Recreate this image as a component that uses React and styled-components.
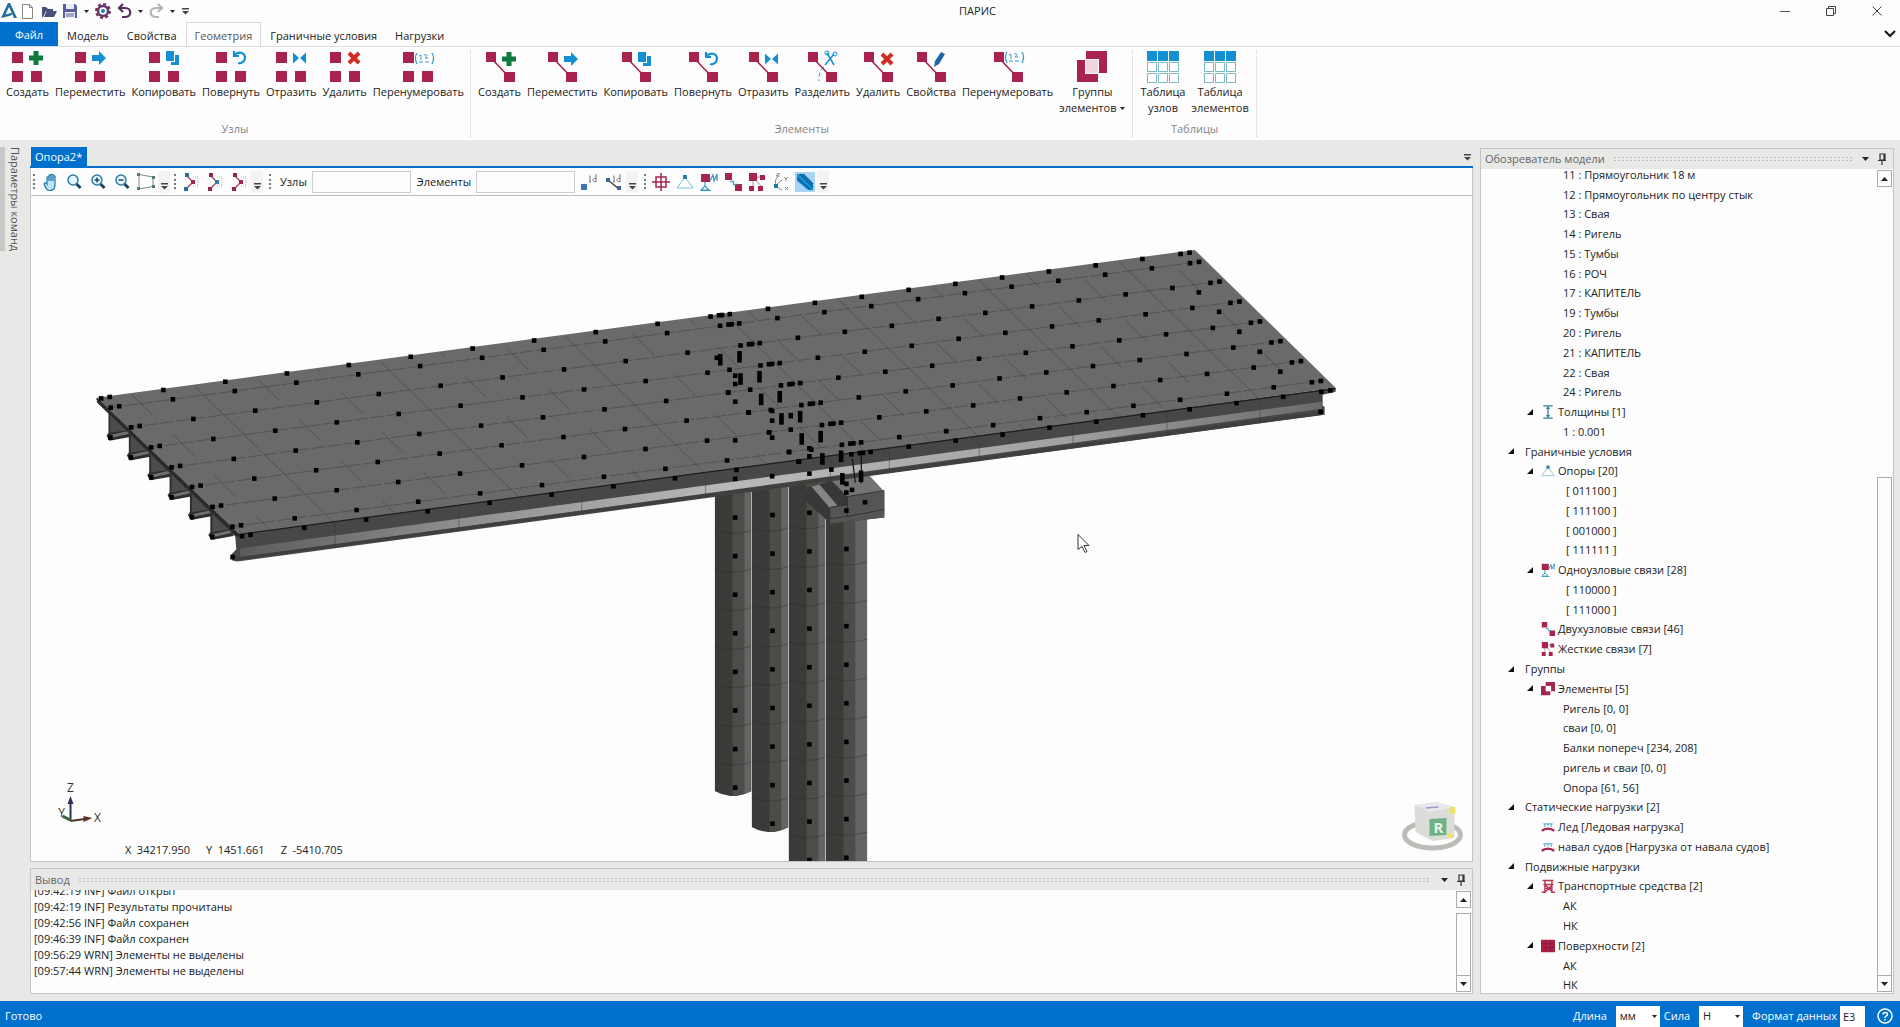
import React from "react"
import styled, { createGlobalStyle, css } from "styled-components"

const berry = "#a8244e"
const sky = "#1490d2"
const blue = "#0070cf"
const chrome = "#e8e8e6"
const paper = "#fdfdfd"
const line = "#c4c4c4"

const GlobalStyle = createGlobalStyle`
	*, *::before, *::after { box-sizing: border-box; }

	body {
		margin: 0;
		background: ${chrome};
		color: #222;
		font-family: "Open Sans", "Noto Sans", sans-serif;
		font-size: 11px;
		line-height: 16px;
	}

	button, input, select {
		font: inherit;
		color: inherit;
		margin: 0;
		padding: 0;
		border: 0;
		border-radius: 0;
		background: none;
	}

	svg { display: block; flex: none; }
`

/* ---------- shell ---------- */

const Shell = styled.div`
	display: flex;
	flex-direction: column;
	height: 100vh;
	overflow: hidden;
`

const TitleBar = styled.header`
	display: flex;
	height: 22px;
	background: ${paper};
`

const QuickAccess = styled.div`
	display: flex;
	align-items: center;
	padding-left: 1px;
`

const QuickButton = styled.button`
	display: flex;
	align-items: center;
	justify-content: center;
	width: ${(p) => p.$w || 20}px;
	height: 20px;
`

const Title = styled.h1`
	flex: 1;
	margin: 0;
	font-size: 11px;
	font-weight: 400;
	line-height: 22px;
	text-align: center;
`

const WindowButton = styled(QuickButton)`
	width: 46px;
	height: 22px;
`

const Tabs = styled.nav`
	display: flex;
	height: 25px;
	background: ${paper};
	border-bottom: 1px solid #dedede;
`

const Tab = styled.button`
	padding: 2px 8px 0;
	border: 1px solid transparent;
	border-bottom: 0;
	${(p) => p.$active && css`
		color: #555;
		border-color: #d8d8d8;
	`}
`

const FileTab = styled(Tab)`
	width: 58px;
	padding-top: 0;
	color: #fff;
	background: ${blue};
`

const CollapseButton = styled(QuickButton)`
	margin-left: auto;
	height: 24px;
`

const Ribbon = styled.div`
	display: flex;
	height: 93px;
	padding: 3px 0 3px;
	background: ${paper};
`

const Group = styled.section`
	display: flex;
	flex-direction: column;
	justify-content: space-between;
	padding: 0 ${(p) => p.$pad || 3}px;
	border-right: 1px dotted #cfcfcf;
`

const GroupItems = styled.div`
	display: flex;
	align-items: flex-start;
`

const GroupName = styled.div`
	color: #858585;
	text-align: center;
`

const Command = styled.button`
	display: flex;
	flex-direction: column;
	align-items: center;
	padding: 1px 3px 0;
	white-space: pre;

	> svg { margin-bottom: 1px; }
`

const DropLine = styled.span`
	display: flex;
	align-items: center;
	gap: 4px;
`

const Workspace = styled.main`
	display: flex;
	flex: 1;
	min-height: 0;
	padding: 7px 6px 7px 0;
`

const SideStrip = styled.aside`
	width: 30px;
`

const SideTab = styled.button`
	writing-mode: vertical-rl;
	display: block;
	padding-left: 2px;
	border-left: 5px solid #c8c8c8;
	color: #555;
	white-space: nowrap;
`

const Center = styled.div`
	display: flex;
	flex: 1;
	flex-direction: column;
	min-width: 0;
`

const DocTabs = styled.div`
	display: flex;
	align-items: flex-start;
	justify-content: space-between;
	height: 21px;
	border-bottom: 2px solid ${blue};
`

const DocTab = styled.button`
	height: 19px;
	margin-left: 1px;
	padding: 1px 5px 0 4px;
	color: #fff;
	background: ${blue};
`

const Doc = styled.section`
	display: flex;
	flex: 1;
	flex-direction: column;
	min-height: 0;
	border: 1px solid ${line};
	border-top: 0;
	background: ${paper};
`

const Toolbar = styled.div`
	display: flex;
	align-items: center;
	height: 28px;
	padding-left: 2px;
	border-bottom: 1px solid #bdbdbd;
`

const Grip = styled.span`
	width: 5px;
	height: 15px;
	margin-left: ${(p) => p.$gap || 0}px;
	border-left: 2px dotted #777;
	border-right: 3px solid transparent;
`

const Tool = styled.button`
	display: flex;
	align-items: center;
	justify-content: center;
	width: 24px;
	height: 20px;
	${(p) => p.$on && css`
		background: linear-gradient(90deg, transparent 2px, #a9d4f5 2px 22px, transparent 22px);
	`}
`

const Overflow = styled.button`
	display: flex;
	align-items: flex-end;
	justify-content: center;
	width: 12px;
	height: 22px;
	padding-bottom: 3px;
	background: #f3f3f1;
`

const FieldLabel = styled.label`
	margin: 0 5px 0 6px;
`

const Field = styled.input`
	width: 99px;
	height: 22px;
	border: 1px solid #cccccc;
	background: ${paper};
	& + button { margin-left: 3px; }
`

const Viewport = styled.div`
	position: relative;
	flex: 1;
	min-height: 0;

	> svg { width: 100%; height: 100%; }
`

const Readout = styled.output`
	position: absolute;
	left: 94px;
	bottom: 3px;
	display: flex;
	gap: 16px;
`

const Panel = styled.section`
	display: flex;
	flex-direction: column;
	border: 1px solid ${line};
	background: ${paper};
`

const LogPanel = styled(Panel)`
	height: 126px;
	margin-top: 6px;
`

const ModelPanel = styled(Panel)`
	width: 414px;
	margin: 1px 0 0 7px;
`

const PanelHead = styled.header`
	display: flex;
	align-items: center;
	height: ${(p) => p.$h}px;
	padding: 0 3px 0 4px;
	color: #666;
	background: ${chrome};

	h2 {
		margin: 0;
		font-size: 11px;
		font-weight: 400;
	}
`

const Dots = styled.span`
	flex: 1;
	height: 6px;
	margin: 0 4px 0 8px;
	background: radial-gradient(circle, #bdbdbd 1px, transparent 1px) 0 0 / 4px 3px;
`

const PanelBody = styled.div`
	display: flex;
	flex: 1;
	min-height: 0;
	overflow: hidden;
`

const LogLines = styled.ol`
	display: flex;
	flex: 1;
	flex-direction: column;
	justify-content: flex-end;
	margin: 0;
	padding: 0 0 14px 3px;
	list-style: none;
	overflow: hidden;
`

const Tree = styled.ul`
	display: flex;
	flex: 1;
	flex-direction: column;
	margin: -4px 0 -2px;
	padding: 0;
	list-style: none;
`

const indents = { root: 26, branch: 45, leaf: 82, code: 85 }

const TreeRow = styled.li`
	display: flex;
	flex: 1;
	align-items: center;
	padding-left: ${(p) => indents[p.$kind]}px;
	white-space: nowrap;
`

const Twisty = styled.span`
	width: ${(p) => (p.$kind === "root" ? 18 : 15)}px;
`

const RowIcon = styled.span`
	width: 17px;
`

const Scroll = styled.div`
	display: flex;
	flex-direction: column;
	width: 15px;
	margin: 1px 1px 1px 0;

	button {
		display: flex;
		align-items: center;
		justify-content: center;
		height: 17px;
		border: 1px solid #ababab;
	}
`

const ScrollGap = styled.div`
	flex: ${(p) => p.$size} 0 0;
`

const ScrollThumb = styled.div`
	flex: ${(p) => p.$size} 0 0;
	border: 1px solid #ababab;
	border-bottom: 0;
`

const StatusBar = styled.footer`
	display: flex;
	align-items: center;
	height: 26px;
	padding: 4px 6px 0 5px;
	color: #fff;
	background: ${blue};
`

const StatusText = styled.span`
	flex: 1;
`

const UnitLabel = styled.label`
	margin: 0 9px 0 4px;
`

const FormatLabel = styled.label`
	margin: 0 3px 0 9px;
`

const SelectBox = styled.span`
	position: relative;

	select {
		appearance: none;
		display: block;
		width: 44px;
		height: 21px;
		padding-left: 4px;
		color: #222;
		background: #fff;
	}

	svg {
		position: absolute;
		top: 9px;
		right: 3px;
		pointer-events: none;
	}
`

const FormatField = styled.input`
	width: 25px;
	height: 21px;
	margin-right: 11px;
	padding-left: 3px;
	color: #222;
	background: #fff;
`

/* ---------- small icons ---------- */

const Caret = ({ fill = "#222", flip }) => (
	<svg width="7" height="4" viewBox="0 0 7 4">
		<path d={flip ? "M0 4h7L3.500 0z" : "M0 0h7L3.500 4z"} fill={fill} />
	</svg>
)

const SmallCaret = () => (
	<svg width="5" height="3" viewBox="0 0 5 3">
		<path d="M0 0h5L2.500 3z" fill="#222" />
	</svg>
)

const MoreMark = () => (
	<svg width="7" height="7" viewBox="0 0 7 7">
		<path d="M0 0h7v1.500H0zM0 3h7L3.500 6.500z" fill="#444" />
	</svg>
)

const Pin = () => (
	<svg width="10" height="12" viewBox="0 0 10 12">
		<path d="M3 1h5v6H3zM1 7.500h8M5 7.500V12M7 1v6" fill="none" stroke="#333" strokeWidth="1.200" />
	</svg>
)

const quickIcons = {
	logo: <path d="M0 15 7 0h2l7 15h-3L8 4 4.500 11.500 12 9.500l-2 3z" fill="#1f6f9f" />,
	doc: <path d="M2.500 1.500h7l3 3v11h-10zM9.500 1.500v3h3" fill="#fff" stroke="#888" />,
	open: <path d="M1 4h4l2 2h5v2H5l-3 6H1zM5.500 8H16l-3 6H3z" fill="#46527a" />,
	save: (
		<g>
			<path d="M1 1h12l2 2v12H1z" fill="#5d5d9c" />
			<path d="M4 1h8v5H4zM3 9h10v6H3z" fill="#e8eef6" />
			<path d="M4 11h8M4 13h8" stroke="#5d5d9c" />
		</g>
	),
	gear: (
		<g fill="none">
			<circle cx="8" cy="8" r="5" stroke="#5c3a6c" strokeWidth="2.500" />
			<circle cx="8" cy="8" r="7" stroke="#7d2850" strokeWidth="2" strokeDasharray="3 2.500" />
			<circle cx="8" cy="8" r="2" fill="#1d7cba" />
		</g>
	),
	undo: <path d="M6 1 2 5l4 4M2 5h6c7 0 7 9 0 9H5" fill="none" stroke="#5b2e62" strokeWidth="2.200" />,
	redo: <path d="M10 1l4 4-4 4M14 5H8C1 5 1 14 8 14h3" fill="none" stroke="#b5b5b5" strokeWidth="2.200" />,
}

const QuickIcon = ({ name }) => (
	<svg width="16" height="16" viewBox="0 0 16 16">{quickIcons[name]}</svg>
)

const marks = {
	create: <path d="M4.500 0h5v4.500H14v5H9.500V14h-5V9.500H0v-5h4.500z" fill="#0b7a3a" />,
	move: <path d="M0 4h7V0l7 7-7 7v-4H0z" fill={sky} />,
	copy: (
		<g fill={sky}>
			<path d="M0 0h8v10H0z" />
			<path d="M9 4h4v10H5v-3h4z" />
		</g>
	),
	rotate: <path d="M2 3.500c5-4 10-1 10 3S8 13 5 12M1 0v5h5" fill="none" stroke={sky} strokeWidth="2.200" />,
	mirror: <path d="M0 1.500 6 7l-6 5.500zM13 1.500 7 7l6 5.500z" fill={sky} />,
	remove: <path d="M2 2l10 10M12 2 2 12" stroke="#d12d26" strokeWidth="4" />,
	split: (
		<g fill="none" stroke={sky}>
			<path d="M1 13 10 2M10 13 3 1" strokeWidth="1.500" />
			<circle cx="3" cy="1" r="2" />
			<circle cx="11" cy="2" r="2" />
			<path d="M0 15c-4 3-5 7-5 14" strokeDasharray="4 3" />
		</g>
	),
	edit: <path d="M8 0l4 2-6 10-5 3 1-6z" fill="#1b68a8" />,
	number: (
		<g fill="none" stroke="#3b9bc4">
			<path d="M2 1C0 4 0 8 2 12M17 1c2 3 2 7 0 11" strokeWidth="1.300" />
			<path d="M4 4l2-1v5M9 3c4-1 3 1 1 3h3M4 10h4M10 10h4" />
		</g>
	),
}

const NodeIcon = ({ mark }) => (
	<svg width="32" height="32" viewBox="0 0 32 32" overflow="visible">
		<path d="M1 1h11v11H1zM1 20h11v11H1zM20 20h11v11H20z" fill={berry} />
		<g transform={mark === "number" ? "translate(13 1)" : "translate(18 0)"}>{marks[mark]}</g>
	</svg>
)

const ElementIcon = ({ mark }) => (
	<svg width="32" height="32" viewBox="0 0 32 32" overflow="visible">
		<path d="M7 7l18 19" stroke={berry} strokeWidth="1.600" />
		<path d="M2 1h10v10H2zM20 21h11v10H20z" fill={berry} />
		<g transform={mark === "number" ? "translate(13 0)" : "translate(18 1)"}>{marks[mark]}</g>
	</svg>
)

const OverlapIcon = () => (
	<svg width="32" height="32" viewBox="0 0 32 32">
		<path d="M10 0h21v22H10zM1 9h21v22H1z" fill={berry} />
		<path d="M9 8h14v15H9z" fill="#fff" />
		<path d="M10 9h12v13H10z" fill="#f3d3dc" />
		<path d="M9.500 9V.5M22 22.500h9" stroke="#fff" />
	</svg>
)

const TableIcon = () => (
	<svg width="34" height="32" viewBox="0 0 34 32">
		<path d="M1 0h10v10H1zM12 0h10v10H12zM23 0h10v10H23z" fill={sky} />
		<path
			d="M1.500 11.500h9v9h-9zM12.500 11.500h9v9h-9zM23.500 11.500h9v9h-9zM1.500 22.500h9v9h-9zM12.500 22.500h9v9h-9zM23.500 22.500h9v9h-9z"
			fill="#fff"
			stroke="#7db8c8"
		/>
	</svg>
)

const lens = (
	<g fill="none">
		<circle cx="8" cy="7" r="5" fill="#e6f4fb" stroke="#2a7fae" strokeWidth="1.500" />
		<path d="M11.500 11l4 4" stroke="#1c4560" strokeWidth="3" />
	</g>
)

const nodesPath = (a, b) => (
	<g>
		<path d="M5 3l6 6-7 7" fill="none" stroke="#9a3a55" strokeWidth="1.200" />
		<path d="M11 4h5v9h-5" fill="none" stroke="#c9a9a0" strokeDasharray="1 1" />
		<path d="M3 0h4v4H3zM2 14h4v4H2z" fill={a} />
		<path d="M9 7h4v4H9z" fill={b} />
	</g>
)

const idGlyph = <path d="M9 3v6M8 3h1M8 9h2M15 1v8M15 5.500c-4-1-4 4 0 3.200" fill="none" stroke="#777" />

const toolIcons = {
	hand: (
		<path
			d="M6 10V4.500c0-1 2-1 2 0V8 2.500c0-1 2-1 2 0V8 2c0-1 2-1 2 0v6-4.500c0-1 2-1 2 0V12c0 4-2 5.500-5 5.500S5 16 3 11c0-1.500 2-1.500 3 0z"
			fill="#bfe3f4"
			stroke="#1c76a8"
			strokeWidth="1.200"
		/>
	),
	zoom: lens,
	zoomIn: <g>{lens}<path d="M5.500 7h5M8 4.500v5" stroke="#1c4560" strokeWidth="1.500" /></g>,
	zoomOut: <g>{lens}<path d="M5.500 7h5" stroke="#1c4560" strokeWidth="1.500" /></g>,
	frame: (
		<g>
			<path d="M2 1.500 16 4v9.500L2 16z" fill="none" stroke="#888" />
			<path d="M0 0h3v3H0zM0 14h3v3H0zM15 3h3v3h-3zM15 12h3v3h-3z" fill="#4c8060" />
		</g>
	),
	pickNodes: nodesPath("#2a6f9c", berry),
	pickElements: nodesPath("#8c2945", "#2a7fb0"),
	pickAll: nodesPath("#8c2945", berry),
	nodeId: (
		<g>
			<path d="M0 11h6v6H0z" fill="#4472ac" />
			{idGlyph}
		</g>
	),
	elementId: (
		<g>
			<path d="M3 7l11 9" stroke="#444" strokeWidth="1.500" />
			<path d="M1 5h4v4H1zM12 13h4v4h-4z" fill="#3b6794" />
			{idGlyph}
		</g>
	),
	target: (
		<path d="M9 0v18M0 9h18M4 4h10v10H4z" fill="none" stroke={berry} strokeWidth="1.500" />
	),
	support: (
		<g>
			<path d="M9 4 1 15h16z" fill="none" stroke="#7fc0c8" />
			<path d="M7 2h4v4H7z" fill="#2b7aa8" />
		</g>
	),
	single: (
		<g>
			<path d="M1 1h9v8H1z" fill={berry} />
			<path d="M5 9v5M1 17l4-4 4 4zM1 17.500h10M10 8l3-6 1 6 3-7v7" fill="none" stroke="#3a96bb" strokeWidth="1.200" />
		</g>
	),
	double: (
		<g>
			<path d="M1 0h7v7H1zM11 11h7v7h-7z" fill={berry} />
			<path d="M6 9l3-1 1 4 3-1" fill="none" stroke="#3a96bb" strokeWidth="1.200" />
		</g>
	),
	rigid: (
		<g>
			<path d="M5 5v9M6 5l8 9M6 4h8" stroke="#999" />
			<path d="M1 0h8v8H1zM12 2h5v5h-5zM1 13h5v5H1zM10 13h5v5h-5z" fill={berry} />
		</g>
	),
	axes: (
		<g fill="none" stroke="#888">
			<path d="M6 4C2 6 2 14 10 17M4 12l6-5M4 0h4L4 3h4M12 4l2 2 2-2M14 6v2M13 14l3 3M16 14l-3 3" />
			<path d="M2 11h4v4H2z" fill="#1b78aa" stroke="none" />
		</g>
	),
	solid: (
		<g>
			<path d="M1 1h6l10 10v6h-5L1 8z" fill={sky} />
			<path d="M4 1l13 13M1 5l14 12M7 1l10 10" stroke="#0a5c96" strokeWidth="1.200" />
		</g>
	),
	thickness: <path d="M3 1h12M3 17h12M9 2v14M7 5l2-2 2 2M7 13l2 2 2-2" fill="none" stroke="#2a7fa5" strokeWidth="1.600" />,
	groups: (
		<g>
			<path d="M6 0h12v12H6zM0 5h12v12H0z" fill={berry} />
			<path d="M6 5h7v7H6z" fill="#fff" />
		</g>
	),
	load: (
		<g fill="none">
			<path d="M1 14c4-4 12-4 16 0" stroke={berry} strokeWidth="3" />
			<path d="M3 5h12M5 5v4M9 5v3M13 5v4" stroke="#3aa0bd" strokeWidth="1.200" />
		</g>
	),
	vehicle: (
		<path d="M2 2h14M5 2v15M14 2v15M3 7h13M5 12h9M6 8l8 8M14 8l-8 8M1 17h5M13 17h5" fill="none" stroke="#b83556" strokeWidth="1.800" />
	),
	surface: (
		<g>
			<path d="M0 1h18v16H0z" fill="#b02040" />
			<path d="M0 6h18M0 11h18M6 1v16M12 1v16" stroke="#7d1d45" />
		</g>
	),
}

const ToolIcon = ({ name, size = 18 }) => (
	<svg width={size} height={size} viewBox="0 0 18 18">{toolIcons[name]}</svg>
)

/* ---------- bridge model ---------- */

// offsets of the node rows from the far edge of the deck
const rows = [[0, 0], [9.5, 9.3], [30, 29], [50, 49], [70.5, 69], [91, 88.7], [111.5, 108.7], [131.5, 128.5], [141, 138]]

const farEdge = [
	[100.7, 398.7], [109.3, 397.3], [163, 390.3], [225, 382], [286.7, 373.7], [348.7, 365.3], [410.7, 357],
	[472.7, 348.7], [534.3, 340.7], [596, 332.3], [658, 324], [711, 316.7], [719.5, 315.5], [722.5, 315.2], [730.3, 314.3], [768.5, 309],
	[815.5, 303], [862.5, 297], [909.4, 290], [956.2, 284], [1003, 277.6], [1049.8, 271.6], [1096.7, 265.5],
	[1143.5, 259.1], [1181.7, 254], [1190.7, 252.7],
]

const seams = [131, 194, 256, 318, 380, 441, 503, 565, 627, 690, 726, 749, 792, 839, 886, 933, 980, 1027, 1073, 1120, 1165]

// x, y, height of the nodes of the bearings
const bearings = [
	[720.7, 360, 11], [717.3, 358, 4], [740, 357, 11], [730, 370, 4], [735.7, 376, 4], [735.7, 384.3, 4],
	[741, 379.3, 11], [760, 377, 11], [728.7, 392.7, 4], [750.7, 390, 4], [735.7, 402, 4], [761.7, 399.7, 11],
	[780.3, 397, 11], [749.3, 413, 4], [771.3, 410.3, 4], [772.7, 411.3, 4], [772.7, 421, 4], [782, 417.3, 7],
	[782, 422.7, 4], [791.3, 416, 5], [800.7, 417, 11], [791.3, 430, 4], [769.7, 432.7, 4], [772.7, 438, 4],
	[802.3, 439.3, 11], [821.3, 437, 11], [789.7, 452.3, 4], [810, 448.7, 4], [812, 450, 4], [810, 456.7, 4],
	[823, 459.3, 11], [841.7, 456.7, 11], [799.7, 462, 4], [832, 470, 4], [735.7, 440.7, 4], [735.7, 479.3, 4],
	[772.7, 476.7, 4], [810, 474, 4], [843, 479.3, 11], [847, 484.3, 4], [847, 493, 4], [852.7, 490.3, 4],
	[861.7, 476.7, 11], [865.7, 502.7, 4], [847, 511, 4],
	[1200, 292.5, 4], [1220.3, 312, 4], [1240.6, 332, 4], [1261, 352, 4], [1281.6, 372, 4], [1322, 412, 4],
]

const piles = [
	{ x: 715, w: 37, end: 792, node: 735.7, from: 518, count: 8 },
	{ x: 752, w: 37, end: 828, node: 773, from: 515.5, count: 9 },
	{ x: 789, w: 37, end: 870, node: 810, from: 513.3, count: 10 },
	{ x: 826, w: 42, end: 870, node: 847, from: 549.5, count: 9 },
]

const Node = ({ x, y, h = 4 }) => <rect x={x - 2.3} y={y - h / 2 - 0.3} width="4.600" height={h + 0.6} fill="#000" />

const Pile = ({ x, w, end, node, from, count }) => {
	const ticks = Array.from({ length: count }, (_, i) => from + i * 38.65)
	return (
		<g>
			<clipPath id={`pile${x}`}>
				<path d={`M${x} 470V${end}q${w / 2} 10 ${w} 0V470z`} />
			</clipPath>
			<g clipPath={`url(#pile${x})`}>
				<rect x={x} y="470" width={w} height="400" fill="#3a3a38" />
				<rect x={x + 18} y="470" width={w - 18} height="400" fill="#4c4c49" />
				<rect x={x + 30} y="470" width={w - 30} height="400" fill="#646464" />
				{ticks.filter((y) => y + 20 < end).map((y) => (
					<path key={y} d={`M${x} ${y + 13}q${w / 2} 6 ${w} 0`} fill="none" stroke="#2b2b29" strokeWidth="0.400" />
				))}
			</g>
			{ticks.map((y) => <Node key={y} x={node} y={y} />)}
		</g>
	)
}

const Beam = ({ i }) => (
	<g transform={`translate(${i * 20.4} ${i * 19.9})`}>
		<path d="M108 411v22l-2 3 3 5 22-4v-6z" fill="#2f2f2e" />
		<path d="M110 414v19l20-3z" fill="#4c4c4a" />
		<path d="M111 435l18-4v3l-18 4z" fill="#70706e" />
		<Node x={110} y={438} />
	</g>
)

const Model = () => (
	<svg viewBox="31 196 1442 666" role="img" aria-label="Опора2">
		<defs>
			<linearGradient id="flange">
				<stop offset="0" stopColor="#5c5c5c" />
				<stop offset="0.200" stopColor="#8e8e8d" />
				<stop offset="0.450" stopColor="#b9b9b8" />
				<stop offset="0.750" stopColor="#a3a3a2" />
				<stop offset="1" stopColor="#6b6b6b" />
			</linearGradient>
		</defs>

		{piles.map((p) => <Pile key={p.x} {...p} />)}

		<path d="M808 488l24-7 16 16 37-5v26l-54 6-26-24z" fill="#383837" />
		<path d="M812 487l8-2 18 21-8 2z" fill="#858584" />
		<path d="M832 481l38-5 15 16-37 5z" fill="#747473" />
		<path d="M831 508l17-3v-8l37-6v27l-54 6z" fill="#555553" />
		<path d="M831 508l17-3v-8l37-6M831 519l17-2 37-7M848 505v12" fill="none" stroke="#2c2c2b" strokeWidth="0.800" />

		{[0, 1, 2, 3, 4, 5].map((i) => <Beam key={i} i={i} />)}

		<path d="M96 398l2 6 137 133 1 13-5 5 1 6 5 1L1326 415v-8l-2-1v-11l13-3v-4L238 530z" fill="#474746" />
		<path d="M240 549 1323 402v7L240 558z" fill="url(#flange)" />
		<path d="M235 558 1325 411v4L235 561z" fill="#3f3f3e" />
		<path d="M96 398 1196 250l141 138L238 535z" fill="#6a6a69" />
		<path d="M96 399l142 136L1337 389" fill="none" stroke="#1d1d1c" strokeWidth="1.200" />
		<path d="M97 401l141 136" stroke="#2b2b2a" strokeWidth="3" />

		<g stroke="#3a3a37" strokeWidth="0.500" fill="none">
			{rows.slice(1, 8).map(([dx, dy]) => (
				<path key={dx} d={`M${98 + dx} ${399 + dy}L${1194 + dx} ${252 + dy}`} strokeDasharray="14 2" />
			))}
			{seams.map((x, i) => (
				<path
					key={x}
					d={`M${x} ${394.8 - (x - 131) * 0.1345}l141 138`}
					strokeDasharray={i % 3 === 1 ? "none" : "30 28"}
					strokeDashoffset={i * 28}
				/>
			))}
			{seams.filter((x, i) => i % 2).map((x) => (
				<path key={x} d={`M${x + 141} ${533 - (x - 131) * 0.1345}v24`} />
			))}
		</g>

		{rows.map(([dx, dy]) => farEdge.map(([x, y]) => <Node key={`${x}-${dx}`} x={x + dx} y={y + dy} />))}
		{bearings.map(([x, y, h]) => <Node key={`${x}-${y}`} x={x} y={y} h={h} />)}
		<Node x={232.3} y={557.7} />
		<path d="M853 459l3 24M862 456v28" stroke="#111" strokeWidth="1.200" />

		<path d="M1079 535v15l4-3 3 6 2-1-3-6h5z" fill="#fff" stroke="#333" />

		<g strokeWidth="2">
			<path d="M70 822V802" stroke="#2e2e5c" />
			<path d="M67 805h6l-3-8z" fill="#2e2e5c" />
			<path d="M70 822l14-2" stroke="#5a3426" />
			<path d="M83 817v6l9-4z" fill="#5a3426" />
			<path d="M70 821l-8-4" stroke="#3a6b42" strokeWidth="3" />
		</g>
		<g fontSize="12" fill="#333" textAnchor="middle">
			<text x="70" y="793">Z</text>
			<text x="97" y="823">X</text>
			<text x="61" y="818">Y</text>
		</g>

		<ellipse cx="1434" cy="836" rx="28" ry="13" fill="none" stroke="#bdbdb8" strokeWidth="5" />
		<path d="M1416 806l22-3 18 5v31l-22 3-17-9z" fill="#dcdcd8" />
		<path d="M1416 806l22-3 18 5-24 5z" fill="#e9e9ec" />
		<path d="M1427 809l13-1" stroke="#9a9ad0" strokeWidth="1.500" />
		<path d="M1451 808h6v7h-6zM1449 834h5v5h-5z" fill="#f0e070" />
		<path d="M1431 820l17-1v17l-17 1z" fill="#6fb183" />
		<text x="1440" y="834" fontSize="15" fontWeight="700" fill="#e8f3ea" textAnchor="middle">R</text>
	</svg>
)

/* ---------- content ---------- */

const nodeCommands = [
	["Создать", "create"], ["Переместить", "move"], ["Копировать", "copy"], ["Повернуть", "rotate"],
	["Отразить", "mirror"], ["Удалить", "remove"], ["Перенумеровать", "number"],
]

const elementCommands = [
	["Создать", "create"], ["Переместить", "move"], ["Копировать", "copy"], ["Повернуть", "rotate"],
	["Отразить", "mirror"], ["Разделить", "split"], ["Удалить", "remove"], ["Свойства", "edit"],
	["Перенумеровать", "number"],
]

const log = [
	"[09:42:19 INF] Файл открыт",
	"[09:42:19 INF] Результаты прочитаны",
	"[09:42:56 INF] Файл сохранен",
	"[09:46:39 INF] Файл сохранен",
	"[09:56:29 WRN] Элементы не выделены",
	"[09:57:44 WRN] Элементы не выделены",
]

const tree = [
	["leaf", "11 : Прямоугольник 18 м"],
	["leaf", "12 : Прямоугольник по центру стык"],
	["leaf", "13 : Свая"],
	["leaf", "14 : Ригель"],
	["leaf", "15 : Тумбы"],
	["leaf", "16 : РОЧ"],
	["leaf", "17 : КАПИТЕЛЬ"],
	["leaf", "19 : Тумбы"],
	["leaf", "20 : Ригель"],
	["leaf", "21 : КАПИТЕЛЬ"],
	["leaf", "22 : Свая"],
	["leaf", "24 : Ригель"],
	["branch", "Толщины [1]", "thickness"],
	["leaf", "1 : 0.001"],
	["root", "Граничные условия"],
	["branch", "Опоры [20]", "support"],
	["code", "[ 011100 ]"],
	["code", "[ 111100 ]"],
	["code", "[ 001000 ]"],
	["code", "[ 111111 ]"],
	["branch", "Одноузловые связи [28]", "single"],
	["code", "[ 110000 ]"],
	["code", "[ 111000 ]"],
	["branch", "Двухузловые связи [46]", "double", true],
	["branch", "Жесткие связи [7]", "rigid", true],
	["root", "Группы"],
	["branch", "Элементы [5]", "groups"],
	["leaf", "Ригель [0, 0]"],
	["leaf", "сваи [0, 0]"],
	["leaf", "Балки попереч [234, 208]"],
	["leaf", "ригель и сваи [0, 0]"],
	["leaf", "Опора [61, 56]"],
	["root", "Статические нагрузки [2]"],
	["branch", "Лед [Ледовая нагрузка]", "load", true],
	["branch", "навал судов [Нагрузка от навала судов]", "load", true],
	["root", "Подвижные нагрузки"],
	["branch", "Транспортные средства [2]", "vehicle"],
	["leaf", "АК"],
	["leaf", "НК"],
	["branch", "Поверхности [2]", "surface"],
	["leaf", "АК"],
	["leaf", "НК"],
]

const Tools = ({ names, active }) =>
	names.map((name) => (
		<Tool key={name} $on={name === active} aria-label={name}>
			<ToolIcon name={name} />
		</Tool>
	))

const Scrollbar = ({ before, thumb }) => (
	<Scroll>
		<button aria-label="Вверх"><Caret flip /></button>
		<ScrollGap $size={before} />
		<ScrollThumb $size={thumb} />
		<button aria-label="Вниз"><Caret /></button>
	</Scroll>
)

const PanelHeader = ({ title, height }) => (
	<PanelHead $h={height}>
		<h2>{title}</h2>
		<Dots />
		<QuickButton $w={18} aria-label="Меню панели"><Caret /></QuickButton>
		<QuickButton $w={16} aria-label="Закрепить"><Pin /></QuickButton>
	</PanelHead>
)

const TreeItem = ({ kind, text, icon, closed }) => (
	<TreeRow $kind={kind}>
		{(kind === "root" || kind === "branch") && (
			<Twisty $kind={kind}>
				{!closed && <svg width="8" height="7" viewBox="0 0 8 7"><path d="M7 0v6H1z" fill="#111" /></svg>}
			</Twisty>
		)}
		{icon && <RowIcon><ToolIcon name={icon} size={14} /></RowIcon>}
		{text}
	</TreeRow>
)

const App = () => (
	<Shell>
		<GlobalStyle />
		<TitleBar>
			<QuickAccess>
				<QuickButton $w={16} aria-label="ПАРИС"><QuickIcon name="logo" /></QuickButton>
				<QuickButton $w={22} aria-label="Новый"><QuickIcon name="doc" /></QuickButton>
				<QuickButton aria-label="Открыть"><QuickIcon name="open" /></QuickButton>
				<QuickButton $w={22} aria-label="Сохранить"><QuickIcon name="save" /></QuickButton>
				<QuickButton $w={10} aria-label="Варианты сохранения"><SmallCaret /></QuickButton>
				<QuickButton $w={24} aria-label="Настройки"><QuickIcon name="gear" /></QuickButton>
				<QuickButton aria-label="Отменить"><QuickIcon name="undo" /></QuickButton>
				<QuickButton $w={10} aria-label="История отмены"><SmallCaret /></QuickButton>
				<QuickButton $w={22} aria-label="Повторить"><QuickIcon name="redo" /></QuickButton>
				<QuickButton $w={10} aria-label="История повтора"><SmallCaret /></QuickButton>
				<QuickButton $w={16} aria-label="Настройка панели"><MoreMark /></QuickButton>
			</QuickAccess>
			<Title>ПАРИС</Title>
			<WindowButton aria-label="Свернуть">
				<svg width="10" height="10" viewBox="0 0 10 10"><path d="M0 5.500h10" stroke="#555" /></svg>
			</WindowButton>
			<WindowButton aria-label="Восстановить">
				<svg width="10" height="10" viewBox="0 0 10 10"><path d="M.5 2.500h7v7h-7zM2.500 2V.5h7v7H8" fill="none" stroke="#444" /></svg>
			</WindowButton>
			<WindowButton aria-label="Закрыть">
				<svg width="10" height="10" viewBox="0 0 10 10"><path d="M.5.5l9 9M9.500.5l-9 9" stroke="#444" /></svg>
			</WindowButton>
		</TitleBar>

		<Tabs>
			<FileTab>Файл</FileTab>
			<Tab>Модель</Tab>
			<Tab>Свойства</Tab>
			<Tab $active>Геометрия</Tab>
			<Tab>Граничные условия</Tab>
			<Tab>Нагрузки</Tab>
			<CollapseButton aria-label="Свернуть ленту">
				<svg width="12" height="8" viewBox="0 0 12 8"><path d="M1 1l5 5 5-5" fill="none" stroke="#111" strokeWidth="2" /></svg>
			</CollapseButton>
		</Tabs>

		<Ribbon>
			<Group>
				<GroupItems>
					{nodeCommands.map(([label, mark]) => (
						<Command key={label}><NodeIcon mark={mark} />{label}</Command>
					))}
				</GroupItems>
				<GroupName>Узлы</GroupName>
			</Group>
			<Group $pad={4}>
				<GroupItems>
					{elementCommands.map(([label, mark]) => (
						<Command key={label}><ElementIcon mark={mark} />{label}</Command>
					))}
					<Command>
						<OverlapIcon />
						Группы
						<DropLine>элементов<SmallCaret /></DropLine>
					</Command>
				</GroupItems>
				<GroupName>Элементы</GroupName>
			</Group>
			<Group $pad={4}>
				<GroupItems>
					<Command><TableIcon />{"Таблица\nузлов"}</Command>
					<Command><TableIcon />{"Таблица\nэлементов"}</Command>
				</GroupItems>
				<GroupName>Таблицы</GroupName>
			</Group>
		</Ribbon>

		<Workspace>
			<SideStrip><SideTab>Параметры команд</SideTab></SideStrip>

			<Center>
				<DocTabs>
					<DocTab>Опора2*</DocTab>
					<QuickButton $w={12} aria-label="Список документов"><MoreMark /></QuickButton>
				</DocTabs>
				<Doc>
					<Toolbar>
						<Grip />
						<Tools names={["hand", "zoom", "zoomIn", "zoomOut", "frame"]} />
						<Overflow aria-label="Ещё"><MoreMark /></Overflow>
						<Grip $gap={4} />
						<Tools names={["pickNodes", "pickElements", "pickAll"]} />
						<Overflow aria-label="Ещё"><MoreMark /></Overflow>
						<Grip $gap={6} />
						<FieldLabel htmlFor="nodes">Узлы</FieldLabel>
						<Field id="nodes" />
						<FieldLabel htmlFor="elements">Элементы</FieldLabel>
						<Field id="elements" />
						<Tools names={["nodeId", "elementId"]} />
						<Overflow aria-label="Ещё"><MoreMark /></Overflow>
						<Grip $gap={6} />
						<Tools names={["target", "support", "single", "double", "rigid", "axes", "solid"]} active="solid" />
						<Overflow aria-label="Ещё"><MoreMark /></Overflow>
					</Toolbar>
					<Viewport>
						<Model />
						<Readout>
							<span>X&ensp;34217.950</span>
							<span>Y&ensp;1451.661</span>
							<span>Z&ensp;-5410.705</span>
						</Readout>
					</Viewport>
				</Doc>
				<LogPanel>
					<PanelHeader title="Вывод" height={21} />
					<PanelBody>
						<LogLines>{log.map((text, i) => <li key={i}>{text}</li>)}</LogLines>
						<Scrollbar before={5} thumb={61} />
					</PanelBody>
				</LogPanel>
			</Center>

			<ModelPanel>
				<PanelHeader title="Обозреватель модели" height={20} />
				<PanelBody>
					<Tree>
						{tree.map(([kind, text, icon, closed], i) => (
							<TreeItem key={i} kind={kind} text={text} icon={icon} closed={closed} />
						))}
					</Tree>
					<Scrollbar before={291} thumb={498} />
				</PanelBody>
			</ModelPanel>
		</Workspace>

		<StatusBar>
			<StatusText>Готово</StatusText>
			<UnitLabel htmlFor="length">Длина</UnitLabel>
			<SelectBox><select id="length"><option>мм</option></select><SmallCaret /></SelectBox>
			<UnitLabel htmlFor="force">Сила</UnitLabel>
			<SelectBox><select id="force"><option>Н</option></select><SmallCaret /></SelectBox>
			<FormatLabel htmlFor="format">Формат данных</FormatLabel>
			<FormatField id="format" defaultValue="E3" />
			<QuickButton $w={18} aria-label="Справка">
				<svg width="16" height="16" viewBox="0 0 16 16" fill="none" stroke="#fff">
					<circle cx="8" cy="8" r="7" strokeWidth="1.500" />
					<path d="M6 6.500c0-3 4.500-2.500 4.500 0C10.500 8 8 8 8 10M8 11v1.500" strokeWidth="1.500" />
				</svg>
			</QuickButton>
		</StatusBar>
	</Shell>
)

export default App
